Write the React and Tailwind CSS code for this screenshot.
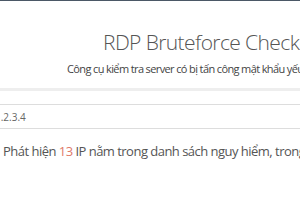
export default function App() {
  return (
    <div
      className="w-[300px] h-[200px] overflow-hidden bg-white text-[#555]"
      style={{ fontFamily: '"Open Sans", "Noto Sans", sans-serif' }}
    >
      <div className="h-[1px] bg-[#4b5866]" />
      <header className="h-[87px] bg-white whitespace-nowrap">
        <h1 className="pt-[27px] pl-[103px] text-[21px] leading-[28px] font-light tracking-[-0.6px] text-[#555]">
          RDP Bruteforce Checker
        </h1>
        <p className="pt-[5px] pl-[67px] text-[11px] leading-[16px] tracking-[-0.62px] text-[#444]">
          Công cụ kiểm tra server có bị tấn công mật khẩu yếu hay không
        </p>
      </header>
      <div className="h-[3px] bg-[#eeeeee]" />
      <div className="pt-[13px]">
        <div className="h-[25px] border-y border-[#dddddd] flex items-center whitespace-nowrap">
          <span className="-ml-[5px] pt-[1px] text-[10px] text-[#666]">1.2.3.4</span>
        </div>
      </div>
      <p className="pt-[12px] pl-[3px] text-[13px] leading-[20px] tracking-[-0.52px] whitespace-nowrap text-[#555]">
        Phát hiện <span className="text-[#e07a6a]">13</span> IP nằm trong danh sách nguy hiểm, trong đó
      </p>
    </div>
  );
}
